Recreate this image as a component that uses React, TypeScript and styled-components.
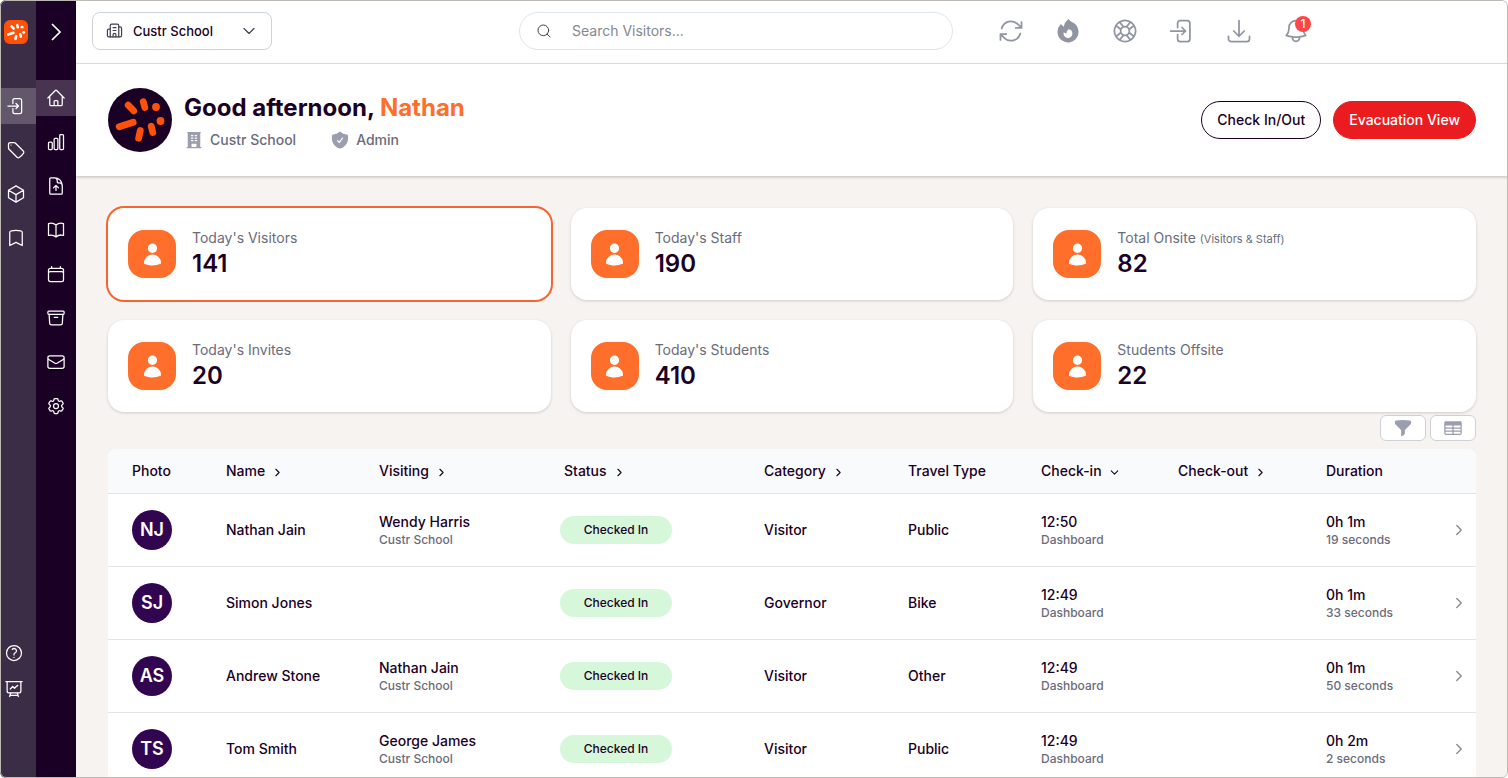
import React from "react";
import styled, { createGlobalStyle, css } from "styled-components";
import {
  HiBuildingOffice,
  HiFire,
  HiFunnel,
  HiOutlineArchiveBox,
  HiOutlineArrowDownTray,
  HiOutlineArrowPath,
  HiOutlineBell,
  HiOutlineBookOpen,
  HiOutlineBookmark,
  HiOutlineCalendar,
  HiOutlineChartBar,
  HiOutlineCog6Tooth,
  HiOutlineCube,
  HiOutlineDocumentArrowUp,
  HiOutlineEnvelope,
  HiOutlineHome,
  HiOutlineLifebuoy,
  HiOutlinePresentationChartLine,
  HiOutlineQuestionMarkCircle,
  HiOutlineTag,
  HiShieldCheck,
  HiTableCells,
  HiUser,
} from "react-icons/hi2";
import { Building2, ChevronDown, ChevronRight, Search } from "lucide-react";

const ink = "#1b0025";
const orange = "#ff6e2b";
const muted = "#6b6b7b";
const line = "#e3e4e8";

const GlobalStyle = createGlobalStyle`
  * { box-sizing: border-box; }
  body {
    margin: 0;
    background: #fff;
    color: ${ink};
    font: 500 14px/20px Inter, "Liberation Sans", sans-serif;
  }
  button, input, select { font: inherit; color: inherit; }
`;

const Frame = styled.div`
  position: relative;
  display: flex;
  height: 100vh;
  overflow: hidden;
  border-radius: 6px;
  &::after {
    content: "";
    position: absolute;
    inset: 0;
    border: 1px solid #bdb9b5;
    border-radius: 6px;
    pointer-events: none;
  }
`;

const Rail = styled.nav<{ $primary?: boolean }>`
  display: flex;
  flex-direction: column;
  flex: none;
  width: ${(p) => (p.$primary ? 36 : 40)}px;
  background: ${(p) => (p.$primary ? "#3c2d47" : ink)};
`;

const RailTop = styled.div<{ $primary?: boolean }>`
  display: flex;
  align-items: center;
  justify-content: ${(p) => (p.$primary ? "flex-start" : "center")};
  height: 64px;
  padding-left: ${(p) => (p.$primary ? 4 : 0)}px;
  margin-bottom: ${(p) => (p.$primary ? 24 : 16)}px;
`;

const RailItems = styled.div`
  display: flex;
  flex-direction: column;
  gap: 8px;
`;

const RailFooter = styled.div`
  display: flex;
  flex-direction: column;
  margin-top: auto;
  padding-bottom: 71px;
`;

const RailLink = styled.a<{ $active?: boolean; $inset?: number }>`
  display: flex;
  align-items: center;
  height: 36px;
  padding-left: ${(p) => p.$inset ?? 10}px;
  color: #fff;
  font-size: 20px;
  ${(p) => p.$active && css`background: rgba(255, 255, 255, 0.2);`}
`;

const IconButton = styled.button`
  display: flex;
  padding: 0;
  border: 0;
  background: none;
  color: inherit;
  cursor: pointer;
`;

const Brand = styled.span`
  display: flex;
  width: 24px;
  height: 24px;
  border-radius: 6px;
  background: #ff5208;
`;

const Content = styled.div`
  display: flex;
  flex: 1;
  flex-direction: column;
  min-width: 0;
  background: #f6f3f0;
`;

const TopBar = styled.header`
  display: grid;
  grid-template-columns: 427fr 434fr 555fr;
  align-items: center;
  flex: none;
  height: 64px;
  padding: 0 0 2px 16px;
  background: #fff;
  border-bottom: 1px solid ${line};
`;

const SiteSelect = styled.label`
  position: relative;
  display: flex;
  align-items: center;
  width: 180px;
  color: #40404f;
  svg { position: absolute; pointer-events: none; }
  svg:first-child { left: 14px; }
  svg:last-child { right: 13px; }
  select {
    width: 100%;
    height: 38px;
    padding: 0 40px;
    appearance: none;
    color: ${ink};
    font-size: 13px;
    background: #fff;
    border: 1px solid #d0d1d6;
    border-radius: 8px;
  }
`;

const SearchBox = styled.label`
  display: flex;
  align-items: center;
  height: 38px;
  gap: 20px;
  padding: 0 16px;
  border: 1px solid ${line};
  border-radius: 19px;
  color: #40404f;
  input {
    flex: 1;
    min-width: 0;
    border: 0;
    padding: 0;
    outline: 0;
    font-weight: 400;
    background: none;
  }
  input::placeholder { color: #858790; opacity: 1; }
`;

const Tools = styled.div`
  display: flex;
  align-items: center;
  gap: 29px;
  padding-left: 44px;
  color: #9095a1;
  font-size: 28px;
`;

const BellButton = styled(IconButton)`
  position: relative;
`;

const Count = styled.span`
  position: absolute;
  top: -1px;
  right: -1px;
  width: 16px;
  height: 16px;
  border-radius: 8px;
  background: #ff4545;
  color: #fff;
  font-size: 12px;
  line-height: 16px;
  text-align: center;
`;

const Hero = styled.section`
  position: relative;
  display: flex;
  align-items: center;
  flex: none;
  gap: 12px;
  padding: 24px 32px;
  background: #fff;
  box-shadow: 0 1px 3px rgba(60, 40, 30, 0.28);
`;

const HeroLogo = styled.span`
  display: flex;
  width: 64px;
  height: 64px;
  border-radius: 50%;
  background: ${ink};
`;

const Greeting = styled.div`
  flex: 1;
  padding-top: 2px;
`;

const Title = styled.h1`
  margin: 0;
  font-size: 24px;
  line-height: 32px;
  font-weight: 700;
  span { color: ${orange}; }
`;

const Facts = styled.div`
  display: flex;
  gap: 34px;
  margin-top: 6px;
`;

const Fact = styled.span`
  display: flex;
  align-items: center;
  gap: 6px;
  color: ${muted};
  svg { color: #9b9eac; font-size: 20px; }
`;

const PillButton = styled.button<{ $danger?: boolean }>`
  height: 38px;
  padding: 0 15px;
  border: 1px solid ${(p) => (p.$danger ? "#ea1c1f" : ink)};
  border-radius: 19px;
  background: ${(p) => (p.$danger ? "#ea1c1f" : "#fff")};
  color: ${(p) => (p.$danger ? "#fff" : ink)};
  cursor: pointer;
`;

const Body = styled.main`
  flex: 1;
  min-height: 0;
  padding: 32px 32px 0;
  overflow-y: auto;
  scrollbar-width: none;
`;

const Cards = styled.div`
  display: grid;
  grid-template-columns: repeat(3, 1fr);
  gap: 20px;
`;

const Card = styled.section<{ $selected?: boolean }>`
  display: flex;
  align-items: center;
  gap: 16px;
  height: 92px;
  padding: 0 20px;
  border-radius: 16px;
  background: #fff;
  box-shadow: ${(p) => (p.$selected ? "0 0 0 2px #f7652f" : "0 1px 3px rgba(30, 20, 50, 0.18)")};
`;

const CardIcon = styled.span`
  display: flex;
  align-items: center;
  justify-content: center;
  width: 48px;
  height: 48px;
  border-radius: 16px;
  background: ${orange};
  color: #fff;
  font-size: 25px;
`;

const CardLabel = styled.div`
  color: ${muted};
  font-weight: 400;
  small { font-size: 11px; line-height: 1; }
`;

const CardValue = styled.div`
  font-size: 24px;
  line-height: 32px;
  font-weight: 600;
`;

const Actions = styled.div`
  display: flex;
  justify-content: flex-end;
  gap: 4px;
  padding: 3px 0 8px;
`;

const ActionButton = styled(IconButton)`
  align-items: center;
  justify-content: center;
  width: 46px;
  height: 26px;
  border: 1px solid #cfd0d7;
  border-radius: 6px;
  background: #fff;
  color: #9b9eae;
  font-size: 20px;
`;

const Table = styled.table`
  width: 100%;
  table-layout: fixed;
  border-spacing: 0;
  background: #fff;
  border-radius: 8px 8px 0 0;
  overflow: hidden;
`;

const cell = css`
  padding: 0 0 0 16px;
  border-bottom: 1px solid ${line};
  text-align: left;
  white-space: nowrap;
  &:first-child { padding-left: 24px; }
`;

const Th = styled.th`
  ${cell}
  height: 45px;
  background: #f9fafc;
  font-weight: 500;
  svg { margin-left: 6px; vertical-align: -3px; }
`;

const Td = styled.td<{ $pill?: boolean }>`
  ${cell}
  height: 73px;
  ${(p) => p.$pill && css`padding-left: 12px;`}
`;

const Sub = styled.div`
  color: ${muted};
  font-size: 12px;
  line-height: 16px;
`;

const Avatar = styled.span`
  display: flex;
  align-items: center;
  justify-content: center;
  width: 40px;
  height: 40px;
  border-radius: 50%;
  background: #320550;
  color: #fff;
  font-size: 18px;
  font-weight: 600;
`;

const Status = styled.span`
  display: block;
  width: 112px;
  border-radius: 14px;
  background: #d7f7db;
  font-size: 12px;
  line-height: 28px;
  text-align: center;
`;

const RowButton = styled(IconButton)`
  margin-left: -8px;
  color: #85868f;
`;

function Spark({ color, size }: { color: string; size: number }) {
  return (
    <svg width={size} height={size} viewBox="0 0 64 64" fill={color} aria-hidden="true">
      <g stroke={color} strokeWidth="6.8" strokeLinecap="round">
        <path d="M20.2 17.2 25.8 22.8M35.3 13.8 36.8 19.5M11.2 38.8 25.2 34.2M32.3 42.5 30.6 50.3M43.2 38.2 44.8 44.5" />
      </g>
      <circle cx="48" cy="19" r="3.9" />
      <circle cx="52.5" cy="33" r="3.9" />
    </svg>
  );
}

function DoorIcon() {
  return (
    <svg width="1em" height="1em" viewBox="0 0 24 24" fill="none" stroke="currentColor" strokeWidth="1.5" strokeLinecap="round" strokeLinejoin="round" aria-hidden="true">
      <path d="M8.25 9V5.25A2.25 2.25 0 0 1 10.5 3h6a2.25 2.25 0 0 1 2.25 2.25v13.5A2.25 2.25 0 0 1 16.5 21h-6a2.25 2.25 0 0 1-2.25-2.25V15M12 9l3 3m0 0-3 3m3-3H2.25" />
    </svg>
  );
}

const productLinks = [
  { name: "Sign in", Icon: DoorIcon },
  { name: "Tags", Icon: HiOutlineTag },
  { name: "Assets", Icon: HiOutlineCube },
  { name: "Bookmarks", Icon: HiOutlineBookmark },
];

const pageLinks = [
  { name: "Home", Icon: HiOutlineHome },
  { name: "Reports", Icon: HiOutlineChartBar },
  { name: "Upload", Icon: HiOutlineDocumentArrowUp },
  { name: "Directory", Icon: HiOutlineBookOpen },
  { name: "Calendar", Icon: HiOutlineCalendar },
  { name: "Archive", Icon: HiOutlineArchiveBox },
  { name: "Messages", Icon: HiOutlineEnvelope },
  { name: "Settings", Icon: HiOutlineCog6Tooth },
];

const stats = [
  { label: "Today's Visitors", value: 141 },
  { label: "Today's Staff", value: 190 },
  { label: "Total Onsite", note: "(Visitors & Staff)", value: 82 },
  { label: "Today's Invites", value: 20 },
  { label: "Today's Students", value: 410 },
  { label: "Students Offsite", value: 22 },
];

const columns = [
  { name: "Photo", width: 102 },
  { name: "Name", width: 153, sort: "none" },
  { name: "Visiting", width: 185, sort: "none" },
  { name: "Status", width: 200, sort: "none" },
  { name: "Category", width: 144, sort: "none" },
  { name: "Travel Type", width: 133 },
  { name: "Check-in", width: 137, sort: "down" },
  { name: "Check-out", width: 148, sort: "none" },
  { name: "Duration", width: 132 },
  { name: "", width: 34 },
];

const visits = [
  { initials: "NJ", name: "Nathan Jain", host: "Wendy Harris", category: "Visitor", travel: "Public", time: "12:50", duration: "0h 1m", seconds: "19 seconds" },
  { initials: "SJ", name: "Simon Jones", host: "", category: "Governor", travel: "Bike", time: "12:49", duration: "0h 1m", seconds: "33 seconds" },
  { initials: "AS", name: "Andrew Stone", host: "Nathan Jain", category: "Visitor", travel: "Other", time: "12:49", duration: "0h 1m", seconds: "50 seconds" },
  { initials: "TS", name: "Tom Smith", host: "George James", category: "Visitor", travel: "Public", time: "12:49", duration: "0h 2m", seconds: "2 seconds" },
];

export default function App() {
  return (
    <Frame>
      <GlobalStyle />
      <Rail $primary aria-label="Products">
        <RailTop $primary>
          <Brand><Spark color="#fff" size={24} /></Brand>
        </RailTop>
        <RailItems>
          {productLinks.map(({ name, Icon }, i) => (
            <RailLink key={name} href="#" aria-label={name} $active={i === 0} $inset={6}><Icon /></RailLink>
          ))}
        </RailItems>
        <RailFooter>
          <RailLink href="#" aria-label="Help" $inset={4}><HiOutlineQuestionMarkCircle /></RailLink>
          <RailLink href="#" aria-label="Training" $inset={4}><HiOutlinePresentationChartLine /></RailLink>
        </RailFooter>
      </Rail>
      <Rail aria-label="Pages">
        <RailTop>
          <IconButton aria-label="Expand menu">
            <svg width="12" height="20" viewBox="0 0 12 20" fill="none" stroke="#fff" strokeWidth="1.7"><path d="m2 2 8 8-8 8" /></svg>
          </IconButton>
        </RailTop>
        <RailItems>
          {pageLinks.map(({ name, Icon }, i) => (
            <RailLink key={name} href="#" aria-label={name} $active={i === 0}><Icon /></RailLink>
          ))}
        </RailItems>
      </Rail>
      <Content>
        <TopBar>
          <SiteSelect>
            <Building2 size={17} strokeWidth={1.7} />
            <select aria-label="Site"><option>Custr School</option></select>
            <ChevronDown size={20} strokeWidth={1.4} />
          </SiteSelect>
          <SearchBox>
            <Search size={16} strokeWidth={1.5} />
            <input type="search" aria-label="Search visitors" placeholder="Search Visitors..." />
          </SearchBox>
          <Tools>
            <IconButton aria-label="Refresh"><HiOutlineArrowPath /></IconButton>
            <IconButton aria-label="Evacuation"><HiFire /></IconButton>
            <IconButton aria-label="Support"><HiOutlineLifebuoy /></IconButton>
            <IconButton aria-label="Check in"><DoorIcon /></IconButton>
            <IconButton aria-label="Download"><HiOutlineArrowDownTray /></IconButton>
            <BellButton aria-label="Notifications"><HiOutlineBell /><Count>1</Count></BellButton>
          </Tools>
        </TopBar>
        <Hero>
          <HeroLogo><Spark color="#ff5208" size={64} /></HeroLogo>
          <Greeting>
            <Title>Good afternoon, <span>Nathan</span></Title>
            <Facts>
              <Fact><HiBuildingOffice />Custr School</Fact>
              <Fact><HiShieldCheck />Admin</Fact>
            </Facts>
          </Greeting>
          <PillButton>Check In/Out</PillButton>
          <PillButton $danger>Evacuation View</PillButton>
        </Hero>
        <Body>
          <Cards>
            {stats.map((s, i) => (
              <Card key={s.label} $selected={i === 0}>
                <CardIcon><HiUser /></CardIcon>
                <div>
                  <CardLabel>{s.label} {s.note && <small>{s.note}</small>}</CardLabel>
                  <CardValue>{s.value}</CardValue>
                </div>
              </Card>
            ))}
          </Cards>
          <Actions>
            <ActionButton aria-label="Filter"><HiFunnel /></ActionButton>
            <ActionButton aria-label="Columns"><HiTableCells /></ActionButton>
          </Actions>
          <Table>
            <colgroup>
              {columns.map((c) => <col key={c.name} width={c.width} />)}
            </colgroup>
            <thead>
              <tr>
                {columns.map((c) => (
                  <Th key={c.name} scope="col">
                    {c.name}
                    {c.sort === "none" && <ChevronRight size={13} />}
                    {c.sort === "down" && <ChevronDown size={13} />}
                  </Th>
                ))}
              </tr>
            </thead>
            <tbody>
              {visits.map((v) => (
                <tr key={v.name}>
                  <Td><Avatar>{v.initials}</Avatar></Td>
                  <Td>{v.name}</Td>
                  <Td>{v.host && <>{v.host}<Sub>Custr School</Sub></>}</Td>
                  <Td $pill><Status>Checked In</Status></Td>
                  <Td>{v.category}</Td>
                  <Td>{v.travel}</Td>
                  <Td>{v.time}<Sub>Dashboard</Sub></Td>
                  <Td />
                  <Td>{v.duration}<Sub>{v.seconds}</Sub></Td>
                  <Td><RowButton aria-label={`Open ${v.name}`}><ChevronRight size={18} strokeWidth={1.7} /></RowButton></Td>
                </tr>
              ))}
            </tbody>
          </Table>
        </Body>
      </Content>
    </Frame>
  );
}
